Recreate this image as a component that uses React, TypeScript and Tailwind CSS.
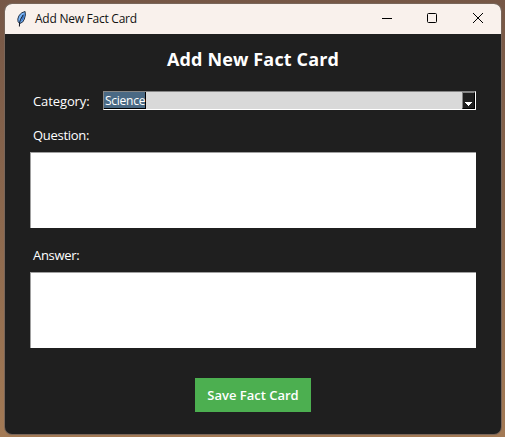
import React from "react";

function Feather() {
  return (
    <svg className="ml-[11px] h-4 w-3 shrink-0" viewBox="0 0 12 16">
      <path d="M9.1 .5 5.8 1.8 3 4.5 1.8 8 2.1 10.8 3.8 12.5 6.7 11 8.4 8 9.4 4Z" fill="#79b5f8" stroke="#142033" strokeWidth=".9" />
      <path d="M8.6 2 8.5 5 7.2 8.5 5 10.8 5.5 7.5Z" fill="#3f78c7" />
      <path d="M7.2 3.8 4.5 8.5 3.5 12 3.4 15.5" fill="none" stroke="#101522" strokeWidth="1" />
    </svg>
  );
}

function TitleBar() {
  return (
    <header className="flex h-[30px] shrink-0 items-center bg-[#f9f1ec] text-[#111111]">
      <Feather />
      <span className="ml-[7px] text-[12px] leading-[16px] tracking-[-0.25px] whitespace-nowrap font-['Open_Sans','Noto_Sans',sans-serif]">Add New Fact Card</span>
      <div className="mr-[18px] ml-auto flex items-center gap-[35px] pb-[2px]">
        <svg width="10" height="10" viewBox="0 0 10 10"><path d="M0 5.5h10" stroke="#000" /></svg>
        <svg width="10" height="10" viewBox="0 0 10 10"><rect x=".5" y=".5" width="9" height="9" rx="1" fill="none" stroke="#000" /></svg>
        <svg className="ml-px" width="10" height="10" viewBox="0 0 10 10"><path d="m0 0 10 10M10 0 0 10" stroke="#000" /></svg>
      </div>
    </header>
  );
}

function TextBox({ label }: { label: string }) {
  return (
    <textarea aria-label={label} className="block h-[76px] w-[446px] resize-none border-t border-l border-[#a0a0a0] bg-white p-1 text-black outline-none" />
  );
}

export default function App() {
  return (
    <div className="h-[437px] w-[505px] overflow-hidden bg-linear-to-b from-[#765746] to-[#a37a55] pt-1 pl-[5px]">
      <main className="flex h-[430px] w-[496px] flex-col overflow-hidden rounded-[7px] bg-[#1f1f1f] text-[13px] text-white shadow-[0_0_0_1px_#79665a] font-['Open_Sans','Noto_Sans',sans-serif]">
        <TitleBar />
        <section className="flex flex-col pl-[25px]">
          <h1 className="mt-[13px] w-[446px] text-center text-[18px] leading-6 font-bold tracking-[0.15px]">Add New Fact Card</h1>
          <div className="mt-5 flex h-[19px] items-center">
            <label className="w-[73px] pt-[2px] pl-[3px] text-[13px] tracking-[-0.1px]">Category:</label>
            <div className="flex h-[19px] w-[373px] border-t border-r border-b border-l border-t-[#858585] border-r-white border-b-white border-l-[#858585] bg-[#d9d9d9]">
              <span className="h-[17px] w-[42px] border-r border-b border-black bg-[#4a6984] pl-px text-[12px] leading-[17px] tracking-[-0.25px]">Science</span>
              <button aria-label="Choose category" className="ml-auto flex h-[17px] w-[13px] items-end justify-center border-t border-r border-b border-l border-t-[#858585] border-r-black border-b-black border-l-[#858585] bg-[#1f1f1f] pb-[2px]">
                <svg width="7" height="4" viewBox="0 0 7 4" shapeRendering="crispEdges"><path d="M0 0h7v1H6v1H5v1H4v1H3V3H2V2H1V1H0Z" fill="white" /></svg>
              </button>
            </div>
          </div>
          <label className="mt-[16px] mb-[8px] pl-[3px] leading-[18px] tracking-[-0.3px]">Question:</label>
          <TextBox label="Question" />
          <label className="mt-[18px] mb-[8px] pl-[3px] leading-[18px] tracking-[-0.3px]">Answer:</label>
          <TextBox label="Answer" />
          <button className="mt-[30px] ml-[165px] h-[34px] w-[116px] bg-[#4caf50] pt-[2px] text-[13px] font-semibold whitespace-nowrap">Save Fact Card</button>
        </section>
      </main>
    </div>
  );
}
